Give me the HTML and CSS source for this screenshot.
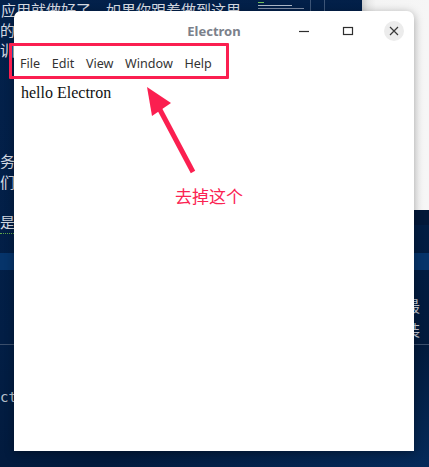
FILE: index.html
```html
<!DOCTYPE html>
<html>
<head>
<meta charset="utf-8">
<link rel="stylesheet" href="styles.css">
</head>
<body>
<div class="desk">
  <div class="bg-text t1">应用就做好了，如果你跟着做到这里</div>
  <div class="bg-text t2">的</div>
  <div class="bg-text t3">训</div>
  <div class="bg-text t4">务</div>
  <div class="bg-text t5">们</div>
  <div class="bg-text t6">是 (</div>
  <div class="squiggle"></div>
  <div class="band"></div>
  <div class="hline"></div>
  <div class="bg-text mono">ctt</div>
  <div class="bg-text r1">最</div>
  <div class="bg-text r2">装</div>
  <div class="top-mini">
    <span class="mini-line g"></span>
    <span class="mini-line w"></span>
    <span class="mini-line w2"></span>
  </div>
  <div class="vline v1"></div>
  <div class="vline v2"></div>
  <div class="panel"></div>
  <div class="panel-strip"></div>

  <div class="window">
    <div class="titlebar">
      <div class="title">Electron</div>
      <div class="controls">
        <span class="ctl min"><svg width="14" height="14" viewBox="0 0 14 14"><path d="M2 7.5h10" stroke="#2e2e2e" stroke-width="1.2"/></svg></span>
        <span class="ctl max"><svg width="14" height="14" viewBox="0 0 14 14"><rect x="2.5" y="3.5" width="9" height="7" fill="none" stroke="#2e2e2e" stroke-width="1.2"/></svg></span>
        <span class="ctl close"><svg width="12" height="12" viewBox="0 0 12 12"><path d="M2 2l8 8M10 2l-8 8" stroke="#3a3a3a" stroke-width="1.2"/></svg></span>
      </div>
    </div>
    <div class="menubar">
      <span class="mi">File</span>
      <span class="mi">Edit</span>
      <span class="mi">View</span>
      <span class="mi">Window</span>
      <span class="mi">Help</span>
    </div>
    <div class="content">hello Electron</div>
  </div>

  <div class="mark-box"></div>
  <svg class="arrow" width="429" height="467" viewBox="0 0 429 467">
    <path d="M193 172 L158 106" stroke="#fb1f50" stroke-width="5" stroke-linecap="butt"/>
    <path d="M147 87 L171 103 L152 116 Z" fill="#fb1f50"/>
  </svg>
  <div class="note">去掉这个</div>
</div>
</body>
</html>
```
FILE: styles.css
```css
html, body {
  margin: 0;
  padding: 0;
}
body {
  width: 429px;
  height: 467px;
  overflow: hidden;
}
.desk {
  position: relative;
  width: 429px;
  height: 467px;
  background: linear-gradient(160deg, #03214b 0%, #021e45 55%, #021a3c 80%, #052a5a 100%);
  overflow: hidden;
  font-family: "Noto Sans CJK SC", "Noto Sans", sans-serif;
}
.bg-text {
  position: absolute;
  color: #d6dbe3;
  font-size: 15px;
  line-height: 20px;
  white-space: nowrap;
}
.t1 { left: 1px; top: 0px; }
.t2 { left: 0; top: 20px; }
.t3 { left: 0; top: 40px; }
.t4 { left: 0; top: 151px; }
.t5 { left: 0; top: 172px; }
.t6 { left: 0; top: 212px; }
.squiggle {
  position: absolute;
  left: 0;
  top: 230px;
  width: 14px;
  height: 3px;
  border-bottom: 1px dotted #5fa84a;
}
.band {
  position: absolute;
  left: 0;
  top: 253px;
  width: 429px;
  height: 17px;
  background: #06346a;
}
.hline {
  position: absolute;
  left: 0;
  top: 344px;
  width: 429px;
  height: 1px;
  background: #3b4f6c;
}
.mono {
  font-family: "DejaVu Sans Mono", monospace;
  font-size: 14px;
  color: #b9c3cf;
  left: 0;
  top: 387px;
}
.r1 { left: 405px; top: 296px; color: #c8ced8; }
.r2 { left: 405px; top: 320px; color: #c8ced8; }
.top-mini {
  position: absolute;
  left: 258px;
  top: 2px;
  width: 50px;
  height: 10px;
  display: flex;
  flex-direction: column;
  gap: 2px;
}
.mini-line { display: block; height: 1px; }
.mini-line.g { width: 6px; background: #6fbf5a; }
.mini-line.w { width: 34px; background: #aeb8c8; }
.mini-line.w2 { width: 46px; background: #7c8aa2; }
.vline {
  position: absolute;
  top: 0;
  width: 1px;
  height: 11px;
  background: #3e5678;
}
.v1 { left: 310px; }
.v2 { left: 324px; }
.panel {
  position: absolute;
  left: 362px;
  top: 0;
  width: 67px;
  height: 210px;
  background: linear-gradient(90deg, #cfcfcf 0px, #e8e8e8 6px, #f4f4f4 14px, #f6f6f6 100%);
}
.panel-strip {
  position: absolute;
  left: 362px;
  top: 210px;
  width: 67px;
  height: 15px;
  background: #031839;
}
.window {
  position: absolute;
  left: 14px;
  top: 11px;
  width: 400px;
  height: 440px;
  background: #ffffff;
  border-radius: 7px 7px 0 0;
  box-shadow: 0 2px 10px rgba(0, 0, 0, 0.35);
  display: flex;
  flex-direction: column;
}
.titlebar {
  position: relative;
  height: 40px;
  display: flex;
  align-items: center;
  justify-content: flex-end;
  padding-right: 10px;
}
.title {
  position: absolute;
  left: 0;
  right: 0;
  text-align: center;
  font-family: "Noto Sans", sans-serif;
  font-weight: bold;
  font-size: 13px;
  color: #7b808a;
  top: 11px;
}
.controls {
  display: flex;
  align-items: center;
  gap: 20px;
}
.ctl {
  width: 24px;
  height: 24px;
  display: flex;
  align-items: center;
  justify-content: center;
  border-radius: 50%;
}
.ctl.close {
  background: #ececec;
  width: 20px;
  height: 20px;
  margin-left: 4px;
}
.menubar {
  height: 24px;
  display: flex;
  align-items: center;
  padding-left: 6px;
  padding-bottom: 2px;
  gap: 11.6px;
  font-family: "Noto Sans", sans-serif;
  font-size: 12.6px;
  color: #333333;
}
.content {
  padding: 7px 7px;
  font-family: "Liberation Serif", serif;
  font-size: 16px;
  color: #111;
}
.mark-box {
  position: absolute;
  left: 9px;
  top: 43px;
  width: 214px;
  height: 30px;
  border: 3px solid #fb1f50;
  border-radius: 1px;
}
.arrow {
  position: absolute;
  left: 0;
  top: 0;
}
.note {
  position: absolute;
  left: 175px;
  top: 185px;
  font-family: "Noto Sans CJK SC", sans-serif;
  font-size: 17px;
  line-height: 22px;
  color: #fb2352;
}
```
